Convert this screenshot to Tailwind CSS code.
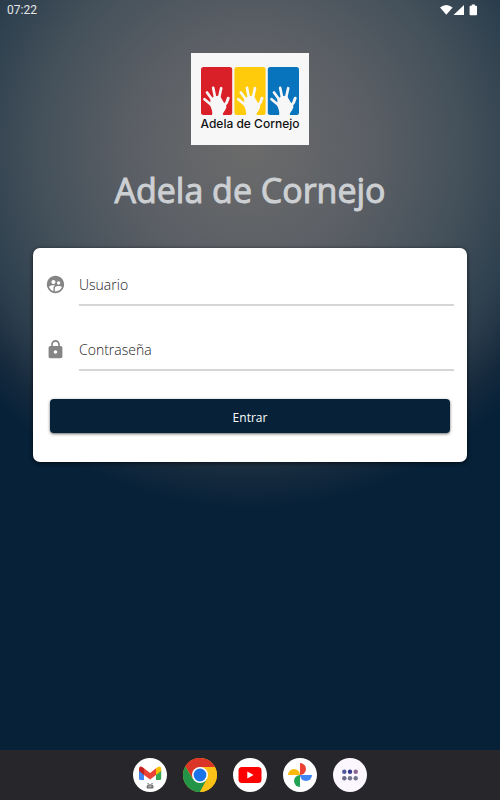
<!DOCTYPE html>
<html lang="es">
<head>
<meta charset="utf-8">
<meta name="viewport" content="width=device-width, initial-scale=1">
<title>Adela de Cornejo</title>
<script src="https://cdn.jsdelivr.net/npm/@tailwindcss/browser@4"></script>
</head>
<body class="flex min-h-screen flex-col bg-[#062138] bg-[radial-gradient(circle_360px_at_50%_150px,#6b6b6b_0%,#5b5f65_33%,#43505a_60%,#2b3d4c_80%,#15293d_91%,#062138_100%)] bg-no-repeat font-['Open_Sans','Noto_Sans',sans-serif]">
  <header class="flex h-5 items-center justify-between pl-[7px] pr-[22px] text-white">
    <time class="font-['Roboto',sans-serif] text-xs leading-5 text-gray-200">07:22</time>
    <svg class="h-3 w-[38px]" viewBox="0 0 38 12" fill="currentColor" aria-label="Wi-Fi, señal y batería">
      <path d="M0 3.4Q6.300-1.600 12.600 3.400L6.300 10.800Z"/>
      <path d="M24 1V11H13.500Z"/>
      <path d="M31.700 .5h3.200v1.200h1.300q.8 0 .8.8v8q0 .8-.8.800h-5.800q-.8 0-.8-.8V2.500q0-.8.8-.8h1.300Z"/>
    </svg>
  </header>

  <main class="flex flex-1 flex-col items-center px-[33px] pt-[33px]">
    <figure class="flex w-[118px] flex-col items-center bg-[#f7f7f8] pt-[14px] pb-3">
      <svg class="h-12 w-[98px]" viewBox="0 0 98 48" aria-hidden="true">
        <defs>
          <g id="hand" fill="#f7f7f8" stroke="#f7f7f8" stroke-linecap="round" stroke-linejoin="round">
            <path stroke="none" d="M11 48C12 45 10.500 42 9 38L9.500 32Q14 28 19 29L22.500 35Q25 37 25.500 40Q24 44 22.500 45.500Q21.500 46.500 22 48Z"/>
            <path stroke-width="2.700" fill="none" d="M11 38.500L3.500 32.200M11.500 33L6 25.500M14.200 31L12.200 20.900M18 31L20.200 21.200"/>
            <path stroke-width="3" fill="none" d="M23 39Q26.200 36 27.200 31.300"/>
            <path stroke-width="3" d="M12 33L17.500 31L21.500 39L13 40Z"/>
          </g>
        </defs>
        <rect width="31.200" height="48" rx="2.500" fill="#d92028"/>
        <rect x="33.400" width="31.200" height="48" rx="2.500" fill="#ffcb0b"/>
        <rect x="66.800" width="31.200" height="48" rx="2.500" fill="#0874bd"/>
        <use href="#hand"/><use href="#hand" x="33.800"/><use href="#hand" x="67"/>
      </svg>
      <figcaption class="font-['Inter',sans-serif] text-[12px] leading-[18px] font-medium whitespace-nowrap text-[#111111]">Adela de Cornejo</figcaption>
    </figure>

    <h1 class="mt-5 text-center text-[34px] leading-[50px] text-[#cdd0d3] [-webkit-text-stroke:1px_#cdd0d3]">Adela de Cornejo</h1>

    <form class="mt-[33px] w-full rounded-[7px] bg-white px-[13px] pt-[19px] pb-[29px] shadow-[0_1px_4px_rgba(0,0,0,0.7)]" onsubmit="return false">
      <div class="flex items-start gap-[14px]">
        <label for="usuario" class="pt-2" aria-label="Usuario">
          <svg class="size-[19px]" viewBox="1 1 22 22" fill="#858585" aria-hidden="true">
            <path d="M11.990 2c-5.520 0-10 4.480-10 10s4.480 10 10 10 10-4.480 10-10-4.480-10-10-10zm3.610 6.340c1.070 0 1.930.86 1.930 1.930 0 1.070-.86 1.930-1.930 1.930-1.070 0-1.930-.86-1.930-1.930-.01-1.070.86-1.930 1.930-1.930zm-6-1.580c1.300 0 2.360 1.060 2.360 2.360 0 1.300-1.060 2.360-2.360 2.360s-2.360-1.060-2.360-2.360c0-1.310 1.050-2.360 2.360-2.360zm0 9.130v3.750c-2.400-.75-4.300-2.600-5.140-4.960 1.050-1.120 3.670-1.690 5.140-1.690.53 0 1.200.08 1.900.22-1.640.87-1.900 2.020-1.900 2.680zM11.990 20c-.27 0-.53-.01-.79-.04v-4.070c0-1.420 2.940-2.130 4.400-2.130 1.070 0 2.920.39 3.840 1.150-1.170 2.970-4.060 5.090-7.450 5.090z"/>
          </svg>
        </label>
        <input id="usuario" type="text" placeholder="Usuario" class="h-[39px] min-w-0 flex-1 border-b-2 border-[#d6d6d6] pb-[2px] text-sm leading-5 font-light text-[#222222] outline-none placeholder:text-[#222222]">
      </div>
      <div class="mt-[26px] flex items-start gap-[14px]">
        <label for="contrasena" class="pt-2" aria-label="Contraseña">
          <svg class="size-[19px]" viewBox="1 1 22 22" fill="#858585" aria-hidden="true">
            <path d="M18 8h-1V6c0-2.760-2.240-5-5-5S7 3.240 7 6v2H6c-1.100 0-2 .9-2 2v10c0 1.100.9 2 2 2h12c1.100 0 2-.9 2-2V10c0-1.100-.9-2-2-2zm-6 9c-1.100 0-2-.9-2-2s.9-2 2-2 2 .9 2 2-.9 2-2 2zm3.100-9H8.900V6c0-1.710 1.390-3.100 3.100-3.100s3.100 1.390 3.100 3.100v2z"/>
          </svg>
        </label>
        <input id="contrasena" type="password" placeholder="Contraseña" class="h-[39px] min-w-0 flex-1 border-b-2 border-[#d6d6d6] pb-[2px] text-sm leading-5 font-light text-[#222222] outline-none placeholder:text-[#222222]">
      </div>
      <div class="mt-7 px-1">
        <button type="submit" class="block h-[34px] w-full rounded-[4px] bg-[#062138] pt-[3px] text-xs leading-5 text-white shadow-[0_1px_3px_rgba(0,0,0,0.6)]">Entrar</button>
      </div>
    </form>
  </main>

  <nav class="flex h-[50px] items-center justify-center gap-4 bg-[#26262b]" aria-label="Aplicaciones">
    <a href="#" aria-label="Gmail"><svg class="size-[34px]" viewBox="0 0 34 34">
      <circle cx="17" cy="17" r="17" fill="#fff"/>
      <path d="M6 11.500V20.500Q6 22 7.500 22H11V14Z" fill="#4285f4"/>
      <path d="M28.200 11.500V20.500Q28.200 22 26.700 22H23V14Z" fill="#34a853"/>
      <path d="M23 10.300L25 9Q28.200 7.500 28.200 11.500V13L23 17Z" fill="#fbbc04"/>
      <path d="M6 13V11.500Q6 7.500 9.200 9L11 10.300V17Z" fill="#c5221f"/>
      <path d="M11 10.300L17.100 14.900L23 10.300V17L17.100 21.500L11 17Z" fill="#ea4335"/>
      <path d="M14.200 27.800Q17.100 25.500 20 27.800V30H14.200Z" fill="#bbb" stroke="#444" stroke-width=".8"/>
      <path d="M14.500 25.800h1.300m2.600 0h1.300M15.500 29h.8m1.600 0h.8" fill="none" stroke="#444" stroke-width="1"/>
    </svg></a>
    <a href="#" aria-label="Chrome"><svg class="size-[34px]" viewBox="0 0 34 34">
      <circle cx="17" cy="17" r="17" fill="#fbc116"/>
      <path d="M17 17L10.100 21L2.280 8.500A17 17 0 0 1 31.960 9H17Z" fill="#db3527"/>
      <path d="M2.280 8.500A17 17 0 0 0 17 34L24 21L17 17L10 21Z" fill="#249547"/>
      <path d="M17 9H31.960A17 17 0 0 1 17 34L24 21Z" fill="#fbc116"/>
      <circle cx="17" cy="17" r="8" fill="#fff"/><circle cx="17" cy="17" r="6.400" fill="#1a73e8"/>
    </svg></a>
    <a href="#" aria-label="YouTube"><svg class="size-[34px]" viewBox="0 0 34 34">
      <circle cx="17" cy="17" r="17" fill="#fff"/><rect x="5.500" y="9" width="23" height="16" rx="3.500" fill="#f00"/><path d="M14.300 13.600L20.500 17L14.300 20.400Z" fill="#fff"/>
    </svg></a>
    <a href="#" aria-label="Google Fotos"><svg class="size-[34px]" viewBox="0 0 34 34">
      <circle cx="17" cy="17" r="17" fill="#fff"/>
      <path d="M17 17V5A6 6 0 0 1 17 17Z" fill="#ea4335"/>
      <path d="M17 17H29A6 6 0 0 1 17 17Z" fill="#4285f4"/>
      <path d="M17 17V29A6 6 0 0 1 17 17Z" fill="#23a455"/>
      <path d="M17 17H5A6 6 0 0 1 17 17Z" fill="#fbb90b"/>
    </svg></a>
    <a href="#" aria-label="Todas las aplicaciones"><svg class="size-[34px]" viewBox="0 0 34 34">
      <circle cx="17" cy="17" r="17" fill="#fcf6ff"/>
      <circle cx="11.300" cy="13.700" r="2.200" fill="#4c5a9b"/><circle cx="17" cy="13.700" r="2.200" fill="#343a8d"/><circle cx="22.700" cy="13.700" r="2.200" fill="#88658e"/>
      <circle cx="11.300" cy="20.300" r="2.200" fill="#6a6b87"/><circle cx="17" cy="20.300" r="2.200" fill="#72758b"/><circle cx="22.700" cy="20.300" r="2.200" fill="#72728a"/>
    </svg></a>
  </nav>
</body>
</html>
